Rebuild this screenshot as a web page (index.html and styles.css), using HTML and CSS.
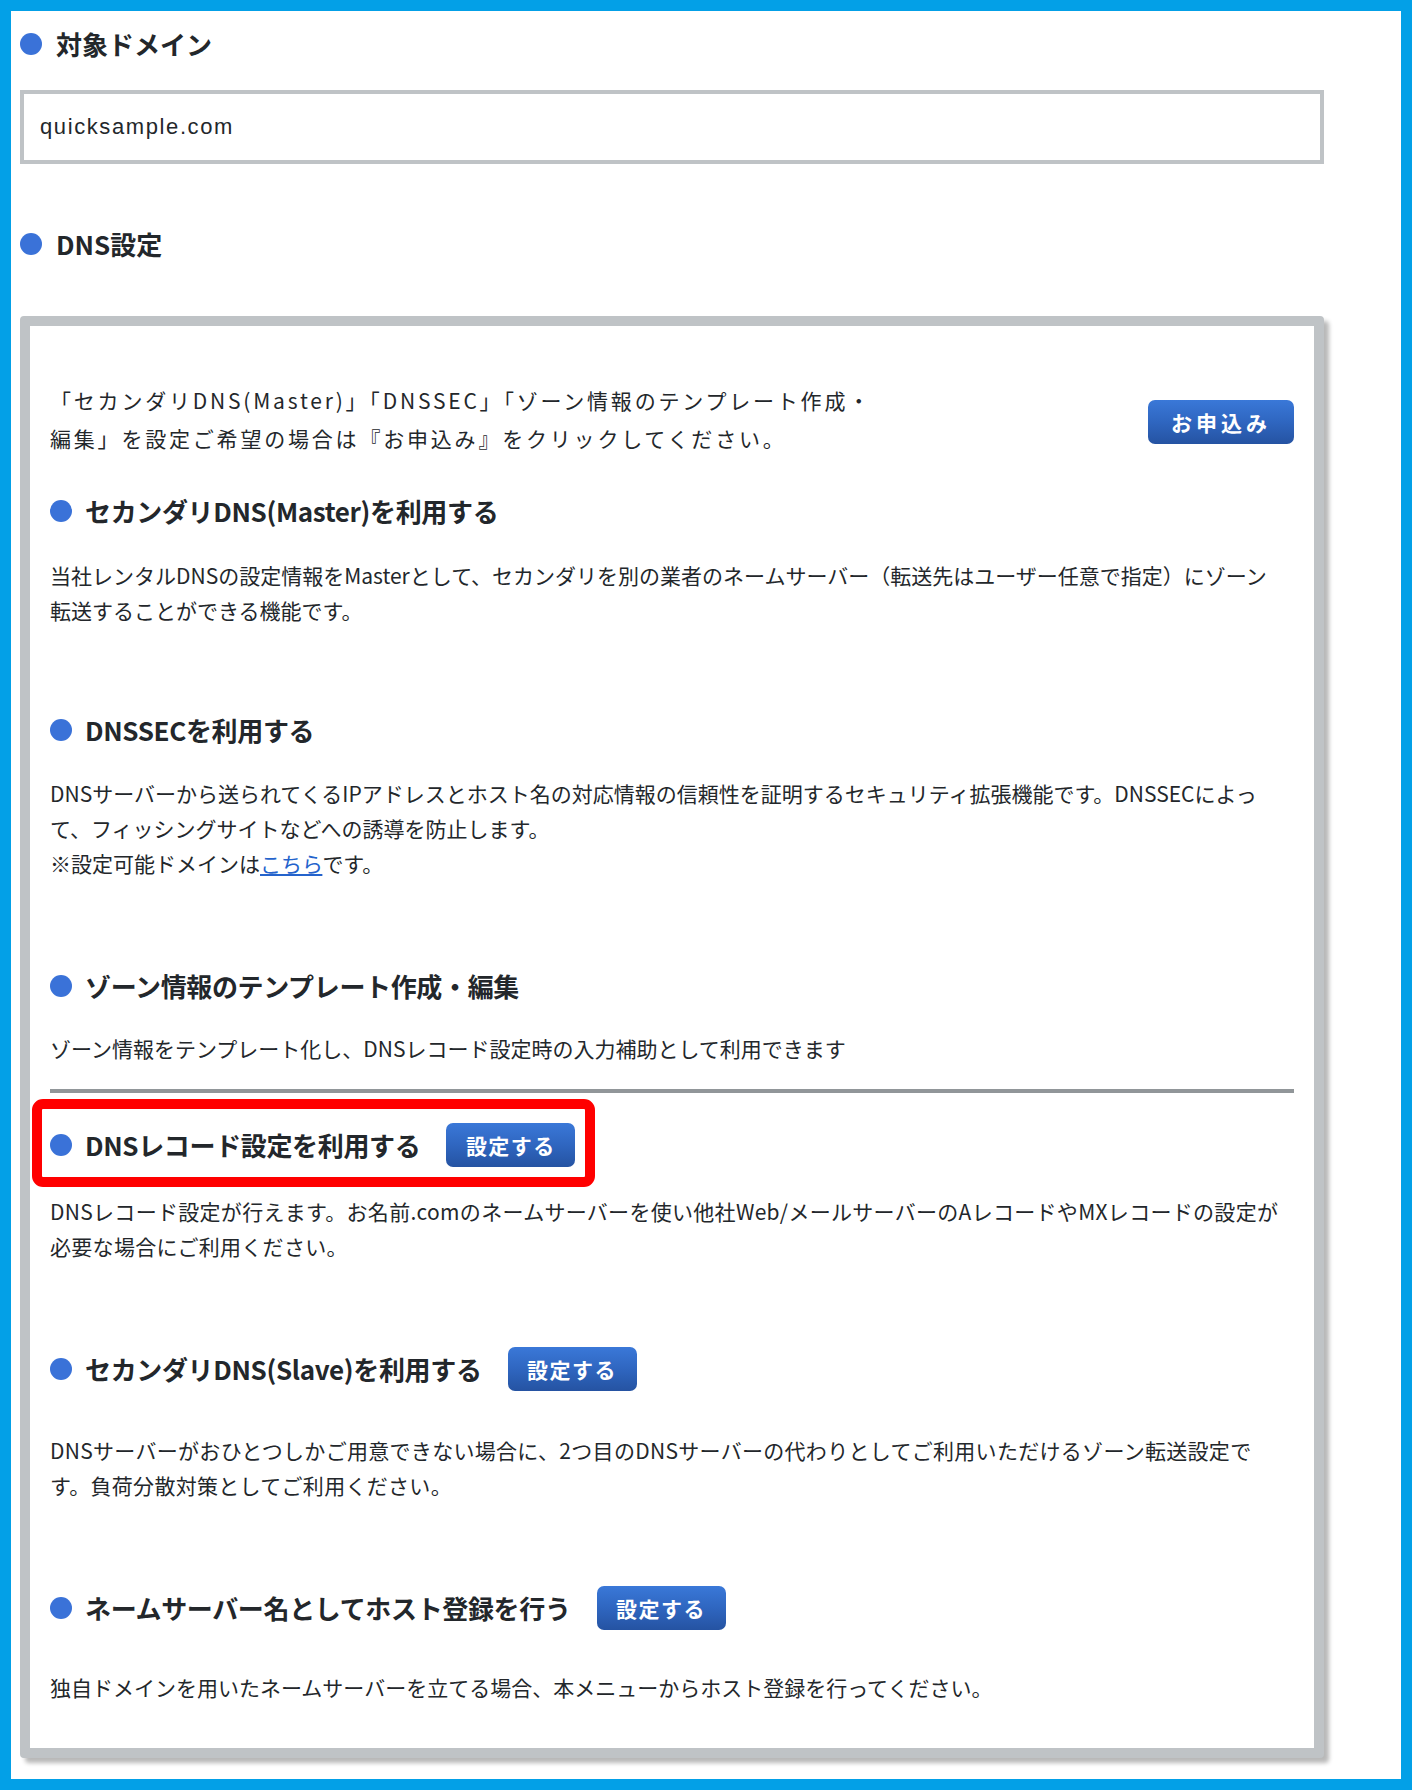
FILE: index.html
```html
<!DOCTYPE html>
<html lang="ja">
<head>
<meta charset="utf-8">
<title>DNS設定</title>
<link rel="stylesheet" href="styles.css">
</head>
<body>
<div class="frame">
  <div class="title-row">
    <span class="dot"></span>
    <h2 class="title">対象ドメイン</h2>
  </div>
  <div class="domain-box">quicksample.com</div>

  <div class="title-row title-row--dns">
    <span class="dot"></span>
    <h2 class="title">DNS設定</h2>
  </div>

  <div class="panel">
    <div class="intro">
      <p class="intro-text">「セカンダリDNS(Master)」「DNSSEC」「ゾーン情報のテンプレート作成・<br>編集」を設定ご希望の場合は『お申込み』をクリックしてください。</p>
      <a class="btn btn--apply" href="#">お申込み</a>
    </div>

    <section class="sec sec--first">
      <div class="sec-head">
        <span class="dot"></span>
        <h3 class="sec-title">セカンダリDNS(Master)を利用する</h3>
      </div>
      <p class="desc">当社レンタルDNSの設定情報をMasterとして、セカンダリを別の業者のネームサーバー（転送先はユーザー任意で指定）にゾーン<br>転送することができる機能です。</p>
    </section>

    <section class="sec sec--dnssec">
      <div class="sec-head">
        <span class="dot"></span>
        <h3 class="sec-title">DNSSECを利用する</h3>
      </div>
      <p class="desc">DNSサーバーから送られてくるIPアドレスとホスト名の対応情報の信頼性を証明するセキュリティ拡張機能です。DNSSECによっ<br>て、フィッシングサイトなどへの誘導を防止します。<br>※設定可能ドメインは<a class="link" href="#">こちら</a>です。</p>
    </section>

    <section class="sec sec--zone">
      <div class="sec-head">
        <span class="dot"></span>
        <h3 class="sec-title">ゾーン情報のテンプレート作成・編集</h3>
      </div>
      <p class="desc">ゾーン情報をテンプレート化し、DNSレコード設定時の入力補助として利用できます</p>
    </section>

    <hr class="divider">

    <section class="sec sec--record">
      <div class="sec-head sec-head--btn sec-head--marked">
        <span class="dot"></span>
        <h3 class="sec-title">DNSレコード設定を利用する</h3>
        <a class="btn" href="#">設定する</a>
      </div>
      <p class="desc desc--wide">DNSレコード設定が行えます。お名前.comのネームサーバーを使い他社Web/メールサーバーのAレコードやMXレコードの設定が<br>必要な場合にご利用ください。</p>
    </section>

    <section class="sec sec--btn">
      <div class="sec-head sec-head--btn">
        <span class="dot"></span>
        <h3 class="sec-title">セカンダリDNS(Slave)を利用する</h3>
        <a class="btn" href="#">設定する</a>
      </div>
      <p class="desc desc--wide">DNSサーバーがおひとつしかご用意できない場合に、2つ目のDNSサーバーの代わりとしてご利用いただけるゾーン転送設定で<br>す。負荷分散対策としてご利用ください。</p>
    </section>

    <section class="sec sec--btn sec--last">
      <div class="sec-head sec-head--btn">
        <span class="dot"></span>
        <h3 class="sec-title">ネームサーバー名としてホスト登録を行う</h3>
        <a class="btn" href="#">設定する</a>
      </div>
      <p class="desc">独自ドメインを用いたネームサーバーを立てる場合、本メニューからホスト登録を行ってください。</p>
    </section>
  </div>
</div>
</body>
</html>
```

FILE: styles.css
```css
html, body {
  margin: 0;
  padding: 0;
  background: #ffffff;
}

body {
  font-family: "Noto Sans CJK JP", "Noto Sans", sans-serif;
  color: #23272b;
}

.frame {
  box-sizing: border-box;
  width: 1412px;
  height: 1790px;
  border: 11px solid #03a0e7;
  padding: 15px 0 0 9px;
  background: #ffffff;
}

.dot {
  flex: none;
  width: 22px;
  height: 22px;
  border-radius: 50%;
  background: #3a72d8;
}

.title-row {
  display: flex;
  align-items: center;
  gap: 14px;
  height: 36px;
}

.title {
  margin: 0;
  font-size: 26px;
  font-weight: 700;
  line-height: 36px;
  color: #23272b;
}

.domain-box {
  box-sizing: border-box;
  width: 1304px;
  height: 74px;
  margin-top: 28px;
  border: 4px solid #bfc3c6;
  padding-left: 16px;
  display: flex;
  align-items: center;
  font-family: "Liberation Sans", Arial, sans-serif;
  font-size: 22px;
  letter-spacing: 1.6px;
  color: #23272b;
}

.title-row--dns {
  margin-top: 62px;
}

.panel {
  box-sizing: border-box;
  width: 1304px;
  height: 1442px;
  margin-top: 54px;
  border: 10px solid #bfc3c6;
  border-radius: 4px;
  box-shadow: 5px 5px 4px rgba(0, 0, 0, 0.28);
  padding: 55px 20px 0 20px;
  background: #ffffff;
}

.intro {
  display: flex;
  align-items: center;
  justify-content: space-between;
}

.intro-text {
  margin: 0;
  font-size: 21px;
  line-height: 38px;
  letter-spacing: 2.8px;
  color: #23272b;
}

.btn {
  flex: none;
  box-sizing: border-box;
  display: inline-flex;
  align-items: center;
  justify-content: center;
  height: 44px;
  padding: 0 18px;
  border-radius: 7px;
  background: linear-gradient(to bottom, #3a78d8 0%, #2f66c0 50%, #2553a2 100%);
  color: #ffffff;
  font-size: 21px;
  font-weight: 700;
  letter-spacing: 1.5px;
  text-decoration: none;
  line-height: 1;
}

.btn--apply {
  width: 146px;
  letter-spacing: 4px;
  margin-top: 6px;
}

.sec-head {
  display: flex;
  align-items: center;
  gap: 13px;
  height: 36px;
}

.sec-head--btn {
  height: 44px;
}

.sec-head--btn .btn {
  width: 129px;
  margin-left: 13px;
}

.sec-title {
  margin: 0;
  font-size: 26px;
  font-weight: 700;
  line-height: 36px;
  letter-spacing: -0.35px;
  color: #23272b;
  white-space: nowrap;
}

.desc {
  margin: 29px 0 0 0;
  font-size: 21px;
  line-height: 35px;
  color: #23272b;
}

.desc--wide {
  letter-spacing: 0.3px;
}

.link {
  color: #2463cc;
  text-decoration: underline;
}

.sec--first {
  margin-top: 36px;
}

.sec--dnssec {
  margin-top: 84px;
}

.sec--dnssec .desc {
  margin-top: 28px;
}

.sec--zone {
  margin-top: 87px;
}

.sec--zone .desc {
  margin-top: 27px;
}

.divider {
  margin: 23px 0 0 0;
  height: 4px;
  border: 0;
  background: #919699;
}

.sec--record {
  margin-top: 6px;
}

.sec-head--marked {
  width: fit-content;
  height: 44px;
  margin-left: -18px;
  padding: 14px 10px 10px 8px;
  border: 10px solid #ff0000;
  border-radius: 11px;
}

.sec--record .desc {
  margin-top: 7px;
}

.sec--btn {
  margin-top: 83px;
}

.sec--btn .desc {
  margin-top: 42px;
}

.sec--last .desc {
  margin-top: 40px;
}
```
